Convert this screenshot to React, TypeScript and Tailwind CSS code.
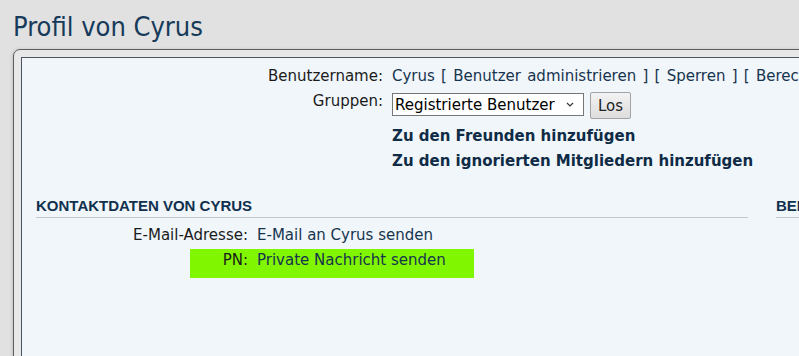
import React from 'react';

const body = "font-['DejaVu_Sans',Verdana,sans-serif]";

const App = () => {
  return (
    <div className={`w-[799px] h-[356px] overflow-hidden bg-[#e1e1e1] ${body}`}>
      {/* Page title */}
      <h2 className="pt-[11px] pl-[13px] font-['DejaVu_Sans_Condensed','DejaVu_Sans',sans-serif] [font-stretch:condensed] text-[27px] leading-[32px] text-[#163a5a] whitespace-nowrap">
        Profil von Cyrus
      </h2>

      {/* Panel frame */}
      <div className="mt-[6px] ml-[13px] w-[830px] h-[400px] rounded-tl-[7px] border border-[#5c5c5c] bg-[#e8e8e8] pt-[7px] pl-[7px] shadow-[-1px_0_3px_rgba(0,0,0,0.12)]">
        <div className="h-full border border-[#4b5560] bg-[#f0f6fa] text-[15px] leading-[18px]">
          {/* User details */}
          <div className="pt-[9px]">
            <div className="flex whitespace-nowrap">
              <div className="w-[361px] shrink-0 text-right text-[#1b1b1b]">Benutzername:</div>
              <div className="ml-[9px] text-[#17344f] [word-spacing:1.5px]">
                Cyrus [ Benutzer administrieren ] [ Sperren ] [ Berechtigungen anzeigen ]
              </div>
            </div>

            <div className="mt-[7px] flex items-start whitespace-nowrap">
              <div className="w-[361px] shrink-0 text-right text-[#1b1b1b]">Gruppen:</div>
              <div className="ml-[9px] mt-[1px] flex h-[23px] w-[192px] items-center justify-between border border-[#767676] bg-white pl-[2px] pr-[9px] text-black">
                <span>Registrierte Benutzer</span>
                <svg width="8" height="5" viewBox="0 0 8 5" fill="none">
                  <path d="M1 1l3 3 3-3" stroke="#333" strokeWidth="1.2" />
                </svg>
              </div>
              <button className="ml-[6px] flex h-[27px] w-[41px] items-center justify-center rounded-[2px] border border-[#a3a3a3] bg-gradient-to-b from-[#f3f3f3] to-[#dddddd] text-[#222]">
                Los
              </button>
            </div>

            <div className="mt-[8px] ml-[370px] font-bold text-[#0f2b46] whitespace-nowrap">
              Zu den Freunden hinzufügen
            </div>
            <div className="mt-[7px] ml-[370px] font-bold text-[#0f2b46] whitespace-nowrap">
              Zu den ignorierten Mitgliedern hinzufügen
            </div>
          </div>

          {/* Contact columns */}
          <div className="mt-[27px] flex gap-[28px] px-[14px]">
            <div className="w-[712px] shrink-0">
              <h3 className="border-b border-[#c6c9cc] pb-[2px] font-['Liberation_Sans',Arial,sans-serif] text-[15px] font-bold leading-[18px] text-[#10304d]">
                KONTAKTDATEN VON CYRUS
              </h3>

              <div className="mt-[8px] flex whitespace-nowrap">
                <div className="w-[212px] shrink-0 text-right text-[#1b1b1b]">E-Mail-Adresse:</div>
                <div className="ml-[9px] text-[#17344f]">E-Mail an Cyrus senden</div>
              </div>

              <div className="mt-[5px] ml-[154px] flex h-[29px] w-[284px] items-start bg-[#80f700] pt-[2px] whitespace-nowrap">
                <div className="w-[58px] shrink-0 text-right text-[#1b1b1b]">PN:</div>
                <div className="ml-[9px] text-[#17344f]">Private Nachricht senden</div>
              </div>
            </div>

            <div className="w-[300px] shrink-0">
              <h3 className="border-b border-[#c6c9cc] pb-[2px] font-['Liberation_Sans',Arial,sans-serif] text-[15px] font-bold leading-[18px] text-[#10304d] whitespace-nowrap">
                BENUTZER-STATISTIK
              </h3>
            </div>
          </div>
        </div>
      </div>
    </div>
  );
};

export default App;
